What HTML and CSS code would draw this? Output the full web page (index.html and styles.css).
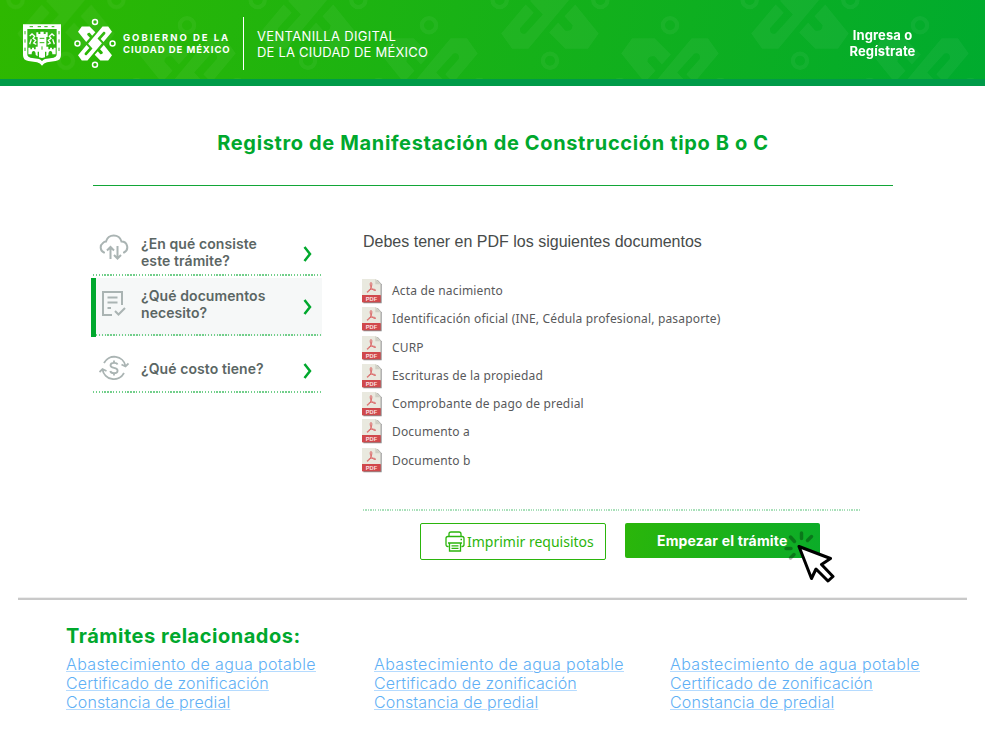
FILE: index.html
```html
<!DOCTYPE html>
<html lang="es">
<head>
<meta charset="utf-8">
<title>Ventanilla Digital de la Ciudad de México</title>
<link rel="stylesheet" href="styles.css">
</head>
<body>
<svg class="defs" aria-hidden="true">
  <defs>
    <g id="knot">
      <g fill="currentColor" transform="scale(.95)">
        <path d="M-54 37L-27 5-18 14-33 31Q-34 39-27 37L-8 16-22 1 24-54H42L54-37 27-5 18-14 33-31Q34-39 27-37L8-16 22-1-24 54H-42z"/>
        <path id="lobe" d="M28 5L54 37 42 54H17L-1 36 9 25 17 34Q25 35 25 28L16 18z"/>
        <use href="#lobe" transform="rotate(180)"/>
      </g>
      <g fill="none" stroke="currentColor" stroke-width="4.500">
        <circle cx="0" cy="-65" r="7.500"/><circle cx="-53" cy="0" r="7.500"/><circle cx="53" cy="0" r="7.500"/><circle cx="0" cy="64" r="7.500"/>
      </g>
    </g>
    <symbol id="pdf" viewBox="0 0 60 75">
      <path d="M4 3H47L59 16V73H4z" fill="#8d8d8d"/>
      <path d="M0 0H42L56 14V50H0z" fill="#e9e9df"/>
      <path d="M40 0L56 16H40z" fill="#cfcfc4"/>
      <path d="M0 48H56V70H0z" fill="#d0494c"/>
      <path d="M26 11C31 9 30 20 27 26C25 31 21 38 17 40C14 40 16 35 24 32C30 30 39 30 41 33C41 37 32 33 28 27C25 22 23 14 26 11z" fill="none" stroke="#dc6868" stroke-width="3"/>
      <text class="pdf-label" x="28.500" y="65" text-anchor="middle">PDF</text>
    </symbol>
    <symbol id="chev" viewBox="0 0 10 16"><path d="M1.500 1L7 8 1.500 15" fill="none" stroke="#00a82d" stroke-width="2.500"/></symbol>
  </defs>
</svg>

<header class="top">
  <svg class="pattern" width="985" height="79" aria-hidden="true">
    <g color="#fff" opacity=".05">
      <use href="#knot" transform="translate(66,0) scale(.95)"/>
      <use href="#knot" transform="translate(308,0) scale(.95)"/>
      <use href="#knot" transform="translate(550,0) scale(.95)"/>
      <use href="#knot" transform="translate(800,0) scale(.95)"/>
      <use href="#knot" transform="translate(187,87) scale(.95)"/>
      <use href="#knot" transform="translate(429,87) scale(.95)"/>
      <use href="#knot" transform="translate(670,87) scale(.95)"/>
      <use href="#knot" transform="translate(920,87) scale(.95)"/>
    </g>
  </svg>
  <svg class="crest" viewBox="0 0 114 124" width="38" height="42">
    <path d="M0 0H114V92Q114 108 98 110L72 114Q62 117 57 124Q52 117 42 114L16 110Q0 108 0 92z" fill="#fff"/>
    <path d="M13 14H101V90Q101 98 92 100L66 104Q59 107 57 111Q55 107 48 104L22 100Q13 98 13 90z" fill="#2bb50c"/>
    <path d="M16 90V70H22V75H27V70H33V75H38V67H44V38H40V24H46V29H52V22H62V29H68V24H74V38H70V67H76V75H81V70H87V75H92V70H98V90H88Q88 80 82 80T76 92L70 96V82H66V99L57 101 48 99V82H44V96L38 92Q38 80 32 80T26 90z" fill="#fff"/>
    <path d="M20 35L27 29 35 36 30 42 38 48 32 56 40 60M94 35L87 29 79 36 84 42 76 48 82 56 74 60M20 60L25 45M94 60L89 45" fill="none" stroke="#fff" stroke-width="4"/>
    <path d="M50 42H64M50 55H64M57 66V76M20 7H30M44 7H54M64 7H74M86 7H94M6 20V30M6 45V55M6 70V80M108 20V30M108 45V55M108 70V80" stroke="#2bb50c" stroke-width="3"/>
  </svg>
  <svg class="knot" viewBox="-63 -77 126 154" width="42" height="51"><use href="#knot" color="#fff"/></svg>
  <div class="gov"><span class="gov1">GOBIERNO DE LA</span><br><span class="gov2">CIUDAD DE MÉXICO</span></div>
  <div class="site"><span class="site1">VENTANILLA DIGITAL</span><br><span class="site2">DE LA CIUDAD DE MÉXICO</span></div>
  <a class="login">Ingresa o<br>Regístrate</a>
</header>

<main>
  <h1>Registro de Manifestación de Construcción tipo B o C</h1>
  <div class="columns">
    <nav>
      <a class="item first">
        <svg class="ico" width="30" height="26" viewBox="0 0 30 26"><path d="M5 18.500A5.500 5.500 0 0 1 4 9A4 4 0 0 1 7 7.500A8 8 0 0 1 22.500 7.500A5.800 5.800 0 0 1 25 18.500" fill="none" stroke="#aab4b3" stroke-width="2" stroke-linecap="round"/><path d="M11.500 25V13M8 16.500L11.500 13 15 16.500M18.500 12V24.500M15 21L18.500 24.500 22 21" fill="none" stroke="#aab4b3" stroke-width="2"/></svg>
        <span class="label">¿En qué consiste<br>este trámite?</span>
        <svg class="chev" width="10" height="16"><use href="#chev"/></svg>
      </a>
      <a class="item active">
        <svg class="ico" width="26" height="27" viewBox="0 0 26 27"><path d="M21 15V2H2V25H11M6.500 7.500H16.500M6.500 12.500H16.500M6.500 18H10M14 21L17.500 24.500 24 18" fill="none" stroke="#aab4b3" stroke-width="2"/></svg>
        <span class="label">¿Qué documentos<br>necesito?</span>
        <svg class="chev" width="10" height="16"><use href="#chev"/></svg>
      </a>
      <a class="item last">
        <svg class="ico" width="30" height="26" viewBox="0 0 30 26"><path d="M5 8A11.500 11.500 0 0 1 26.500 11M29.500 8.500L26.500 11.500 22.500 9.500M25 18A11.500 11.500 0 0 1 3.500 14.500M.5 17L3.500 14 7.500 16" fill="none" stroke="#aab4b3" stroke-width="1.800"/><path d="M18.500 9.500Q18 7.800 15 7.800Q11.500 7.800 11.500 10.300Q11.500 12.300 15 12.800Q18.600 13.300 18.600 15.700Q18.600 18.200 15 18.200Q11.700 18.200 11.300 16M15 5.500V8M15 18V20.500" fill="none" stroke="#aab4b3" stroke-width="1.800"/></svg>
        <span class="label">¿Qué costo tiene?</span>
        <svg class="chev" width="10" height="16"><use href="#chev"/></svg>
      </a>
    </nav>
    <section>
      <h2>Debes tener en PDF los siguientes documentos</h2>
      <ul class="docs">
        <li><svg width="20" height="25"><use href="#pdf"/></svg>Acta de nacimiento</li>
        <li><svg width="20" height="25"><use href="#pdf"/></svg>Identificación oficial (INE, Cédula profesional, pasaporte)</li>
        <li class="tall"><svg width="20" height="25"><use href="#pdf"/></svg>CURP</li>
        <li><svg width="20" height="25"><use href="#pdf"/></svg>Escrituras de la propiedad</li>
        <li class="short"><svg width="20" height="25"><use href="#pdf"/></svg>Comprobante de pago de predial</li>
        <li><svg width="20" height="25"><use href="#pdf"/></svg>Documento a</li>
        <li class="tall"><svg width="20" height="25"><use href="#pdf"/></svg>Documento b</li>
      </ul>
      <div class="actions">
        <button class="print"><svg width="20" height="21" viewBox="0 0 20 21"><path d="M4 5V3Q4 1 6 1H14Q16 1 16 3V5M3.500 15.500H3Q1 15.500 1 13.500V7.500Q1 5.500 3 5.500H17Q19 5.500 19 7.500V13.500Q19 15.500 17 15.500H16.500M3 12H17M4.500 12V20H15.500V12M6.500 14.800H13.500M6.500 17.300H13.500M15.500 8.500H17" fill="none" stroke="#2bb50c" stroke-width="1.300"/></svg>Imprimir requisitos</button>
        <button class="start">Empezar el trámite
          <svg class="cursor" width="52" height="52" viewBox="0 0 52 52"><path d="M17.500 2V7.500M6.500 6L10.500 10.500M27.500 5.500L23.500 9.500M2 17.500H7M6.500 27L10 23.500" stroke="#000" stroke-opacity=".3" stroke-width="3.500" stroke-linecap="round"/><path d="M15 15.500L46.500 27.500 37.500 33.500 49 45.500 44 50 32 38 27.500 47.500z" fill="#fff" stroke="#000" stroke-width="3" stroke-linejoin="round"/></svg>
        </button>
      </div>
    </section>
  </div>
</main>

<footer>
  <h3>Trámites relacionados:</h3>
  <div class="links">
    <div><a class="wide">Abastecimiento de agua potable</a><a>Certificado de zonificación</a><a>Constancia de predial</a></div>
    <div><a class="wide">Abastecimiento de agua potable</a><a>Certificado de zonificación</a><a>Constancia de predial</a></div>
    <div><a class="wide">Abastecimiento de agua potable</a><a>Certificado de zonificación</a><a>Constancia de predial</a></div>
  </div>
</footer>
</body>
</html>
```

FILE: styles.css
```css
* { box-sizing: border-box; }
body { margin: 0; width: 985px; height: 739px; overflow: hidden; background: #fff; font-family: Inter, "Liberation Sans", sans-serif; }
h1, h2, h3, ul { margin: 0; padding: 0; font-weight: normal; }
.defs { position: absolute; width: 0; height: 0; }

.top { position: relative; display: flex; align-items: flex-start; height: 86px; padding-left: 23px; color: #fff; background: linear-gradient(100deg, #2eb800, #00ab2e); border-bottom: 7px solid #009b48; }
.pattern { position: absolute; left: 0; top: 0; }
.crest { margin-top: 24px; }
.knot { margin: 18px 0 0 13px; }
.gov { margin: 32px 0 0 7px; width: 120px; font-size: 9.500px; line-height: 12px; font-weight: 700; white-space: nowrap; }
.gov1 { letter-spacing: 1.970px; }
.gov2 { letter-spacing: .920px; }
.site { height: 53px; margin-top: 17px; padding: 11px 0 0 13px; border-left: 1px solid #fff; font-size: 13px; line-height: 16px; white-space: nowrap; }
.site1 { letter-spacing: .340px; }
.site2 { letter-spacing: .200px; }
.login { position: absolute; left: 822px; top: 27px; width: 121px; text-align: center; font-size: 13px; line-height: 16px; font-weight: 700; letter-spacing: .1px; }

main { padding: 0 92px; }
h1 { height: 100px; margin: 0 0 0 1px; padding-top: 44px; border-bottom: 1px solid #12a637; text-align: center; color: #00a82d; font-size: 20px; line-height: 26px; font-weight: 700; letter-spacing: .640px; white-space: nowrap; }
.columns { display: flex; height: 412px; }
nav { width: 231px; margin-left: -1px; padding-top: 40px; }
.item { display: flex; align-items: flex-start; height: 50px; margin-left: 2px; color: #5b6664; font-size: 14px; line-height: 17px; font-weight: 600; letter-spacing: .080px; background: repeating-linear-gradient(90deg, #72cf8b 0 1.400px, transparent 1.400px 2.870px) left bottom / 100% 2px no-repeat; }
.item .ico { flex: none; margin: 8px 0 0 6px; width: 30px; }
.label { flex: 1; padding: 9px 0 0 12px; white-space: nowrap; }
.chev { margin: 20px 9px 0 0; }
.active { position: relative; height: 58px; margin: 2px 0 0 5px; background-color: #f6f8f8; }
.active::before { content: ""; position: absolute; left: -5px; top: 0; width: 5px; height: 59px; background: #00a82d; }
.active .ico { margin: 12px 0 0 3px; }
.active .label { padding-top: 9px; }
.active .chev { margin-top: 21px; }
.last { height: 57px; }
.last .ico { margin-top: 19px; }
.last .label { padding-top: 24px; }
.last .chev { margin-top: 27px; }

section { width: 498px; margin-left: 40px; padding: 46px 0 0 1px; }
h2 { color: #474b4a; font: 16px/20px "Liberation Sans", sans-serif; }
.docs { list-style: none; height: 259px; padding-top: 25px; background: repeating-linear-gradient(90deg, #a9e0ba 0 1.300px, transparent 1.300px 2.430px) left bottom / 100% 2px no-repeat; color: #58595b; font: 12px/16px "Noto Sans", sans-serif; letter-spacing: .170px; }
.docs li { display: flex; align-items: center; height: 28px; margin-left: -1px; }
.docs .tall { height: 29px; padding-top: 1px; }
.docs .short { height: 27px; margin-top: .5px; }
.docs svg { margin: 0 10px 0 0; }
.pdf-label { font: 700 17px "Liberation Sans", sans-serif; fill: #fbe3e3; letter-spacing: 0; }
.actions { display: flex; align-items: flex-start; gap: 19px; padding: 12px 0 0 57px; }
button { position: relative; display: flex; align-items: center; padding: 0; border: 0; border-radius: 2px; font-size: 14px; white-space: nowrap; }
.print { width: 186px; height: 37px; padding-left: 24px; gap: 2px; border: 1px solid #2bb50c; background: #fff; color: #2bb50c; font-family: "Noto Sans", sans-serif; }
.start { width: 195px; height: 35px; padding-left: 32px; color: #fff; font-family: Inter, sans-serif; font-weight: 700; letter-spacing: .170px; background: linear-gradient(100deg, #2bb60a, #0bac29); }
.cursor { position: absolute; left: 159px; top: 8px; }

footer { margin: 0 18px; padding: 24px 48px 0; border-top: 2px solid #c9c9c9; box-shadow: 0 -1px #eee; }
h3 { color: #00a82d; font-size: 20px; line-height: 24px; font-weight: 700; letter-spacing: .520px; }
.links { display: flex; padding-top: 7px; font-size: 16px; line-height: 19px; font-weight: 300; letter-spacing: .130px; }
.links div { flex: none; display: flex; flex-direction: column; align-items: flex-start; width: 308px; }
.links div + div { width: 296px; }
.links a { flex: none; color: #5fb0f5; text-decoration: underline; text-decoration-color: #b5dbff; text-decoration-thickness: 1px; white-space: nowrap; }
.links .wide { letter-spacing: .360px; }
```
